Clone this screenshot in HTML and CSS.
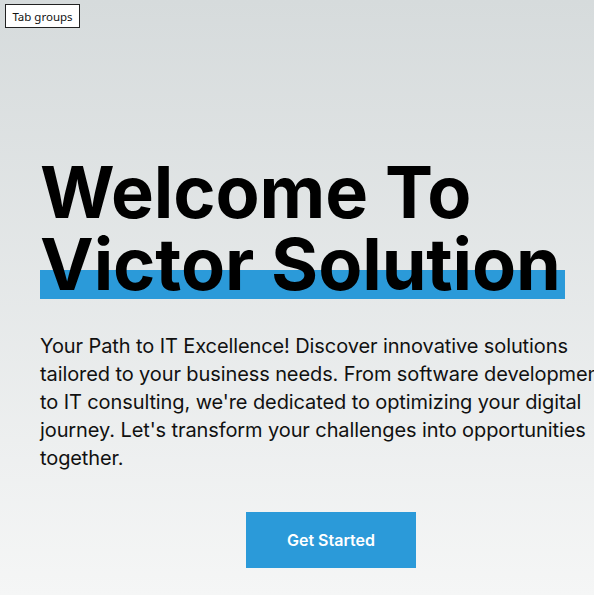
FILE: index.html
```html
<!DOCTYPE html>
<html lang="en">
<head>
<meta charset="utf-8">
<title>Victor Solution</title>
<link rel="stylesheet" href="styles.css">
</head>
<body>
<div class="tab-groups">Tab groups</div>
<section class="hero">
  <div class="hero-inner">
    <h1 class="title">Welcome To<br><span class="highlight">Victor Solution</span></h1>
    <p class="lead">Your Path to IT Excellence! Discover innovative solutions tailored to your business needs. From software development to IT consulting, we're dedicated to optimizing your digital journey. Let's transform your challenges into opportunities together.</p>
    <div class="actions"><a class="btn" href="#">Get Started</a></div>
  </div>
</section>
</body>
</html>
```
FILE: styles.css
```css
html, body {
  margin: 0;
  padding: 0;
  height: 100%;
}
body {
  font-family: Inter, "Noto Sans", sans-serif;
  background: linear-gradient(to bottom, #d6dbdc 0%, #f5f6f6 100%);
  overflow: hidden;
  position: relative;
}
.tab-groups {
  position: absolute;
  top: 4px;
  left: 5px;
  box-sizing: border-box;
  width: 75px;
  height: 24px;
  border: 1px solid #222;
  background: #fff;
  font-family: "Noto Sans", "Open Sans", sans-serif;
  font-size: 11.5px;
  color: #111;
  display: flex;
  align-items: center;
  justify-content: center;
}
.hero {
  padding-top: 156px;
  padding-left: 40px;
}
.hero-inner {
  width: 582px;
}
.title {
  margin: 0;
  font-size: 72px;
  line-height: 72px;
  font-weight: 700;
  color: #000;
  letter-spacing: -0.1px;
}
.highlight {
  display: inline-block;
  position: relative;
  z-index: 0;
}
.highlight::before {
  content: "";
  position: absolute;
  left: 0;
  right: -4px;
  bottom: 1px;
  height: 29px;
  background: #2b9ad9;
  z-index: -1;
}
.lead {
  margin: 32px 0 0;
  font-size: 20px;
  line-height: 28px;
  color: #111;
  letter-spacing: -0.1px;
}
.actions {
  margin-top: 40px;
  display: flex;
  justify-content: center;
}
.btn {
  display: block;
  background: #2b9ad9;
  color: #fff;
  text-decoration: none;
  font-size: 16px;
  font-weight: 600;
  line-height: 24px;
  padding: 16px 41px;
}
```
